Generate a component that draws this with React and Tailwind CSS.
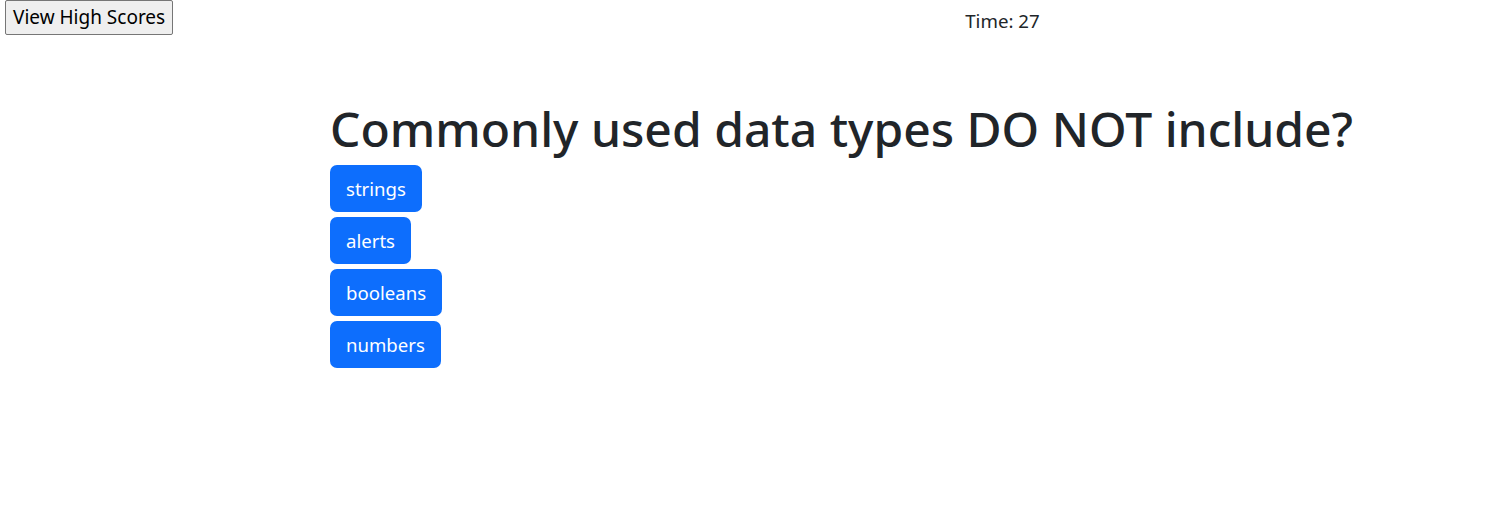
export default function App() {
  const choices = ['strings', 'alerts', 'booleans', 'numbers']

  return (
    <div className="min-h-[526px] bg-white text-[#212529] font-['Noto_Sans',sans-serif]">
      <div className="flex items-start">
        <button
          className="ml-[5px] h-[35px] rounded-[2px] border border-[#767676] bg-[#efefef] px-[7px] text-[19px] leading-none text-black"
          type="button"
        >
          View High Scores
        </button>
        <p className="ml-[792px] mt-[9px] text-[18.7px] leading-[24px]">Time: 27</p>
      </div>

      <main className="ml-[330px] mt-[64px]">
        <h1 className="text-[48px] font-medium leading-[60px]">
          Commonly used data types DO NOT include?
        </h1>
        <div className="mt-[6px] flex flex-col items-start gap-[5px]">
          {choices.map((choice) => (
            <button
              key={choice}
              className="h-[47px] rounded-[7px] bg-[#0d6efd] px-4 text-[18.6px] text-white"
              type="button"
            >
              {choice}
            </button>
          ))}
        </div>
      </main>
    </div>
  )
}
